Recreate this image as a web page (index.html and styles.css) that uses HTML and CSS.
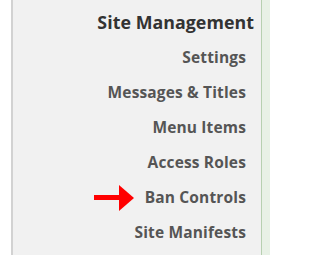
FILE: index.html
```html
<!DOCTYPE html>
<html>
<head>
<meta charset="utf-8">
<link rel="stylesheet" href="styles.css">
</head>
<body>
<div class="layout">
  <div class="gutter"></div>
  <nav class="panel">
    <h2 class="title">Site Management</h2>
    <ul class="menu">
      <li class="item">Settings</li>
      <li class="item">Messages &amp; Titles</li>
      <li class="item">Menu Items</li>
      <li class="item">Access Roles</li>
      <li class="item current">
        <svg class="arrow" width="40" height="26" viewBox="0 0 40 26" aria-hidden="true">
          <rect x="0" y="10" width="26" height="5" fill="#ff0000"/>
          <polygon points="25,0 40,13 25,26" fill="#ff0000"/>
        </svg>
        Ban Controls
      </li>
      <li class="item">Site Manifests</li>
    </ul>
  </nav>
  <div class="side"></div>
</div>
</body>
</html>
```
FILE: styles.css
```css
html, body {
  margin: 0;
  padding: 0;
  background: #ffffff;
}
.layout {
  display: flex;
  width: 270px;
  height: 255px;
}
.gutter {
  width: 11px;
  flex: none;
  background: #ffffff;
}
.panel {
  width: 251px;
  flex: none;
  background: #f1f1f1;
  border-left: 2px solid #d2d2d2;
  border-right: 1px solid #b7d0b1;
  padding: 10px 7px 0 0;
  box-sizing: border-box;
  font-family: "Open Sans", sans-serif;
  font-weight: bold;
  text-align: right;
}
.side {
  flex: 1;
  background: #e8f1e6;
}
.title {
  margin: 0 0 6px 0;
  font-size: 17.8px;
  line-height: 24px;
  color: #333333;
  font-weight: bold;
  letter-spacing: 0.05px;
}
.menu {
  list-style: none;
  margin: 0;
  padding: 0 8px 0 0;
}
.item {
  font-size: 15.5px;
  line-height: 35px;
  color: #555555;
  letter-spacing: 0.15px;
  display: flex;
  justify-content: flex-end;
  align-items: center;
}
.current .arrow {
  margin-right: 11px;
}
```
